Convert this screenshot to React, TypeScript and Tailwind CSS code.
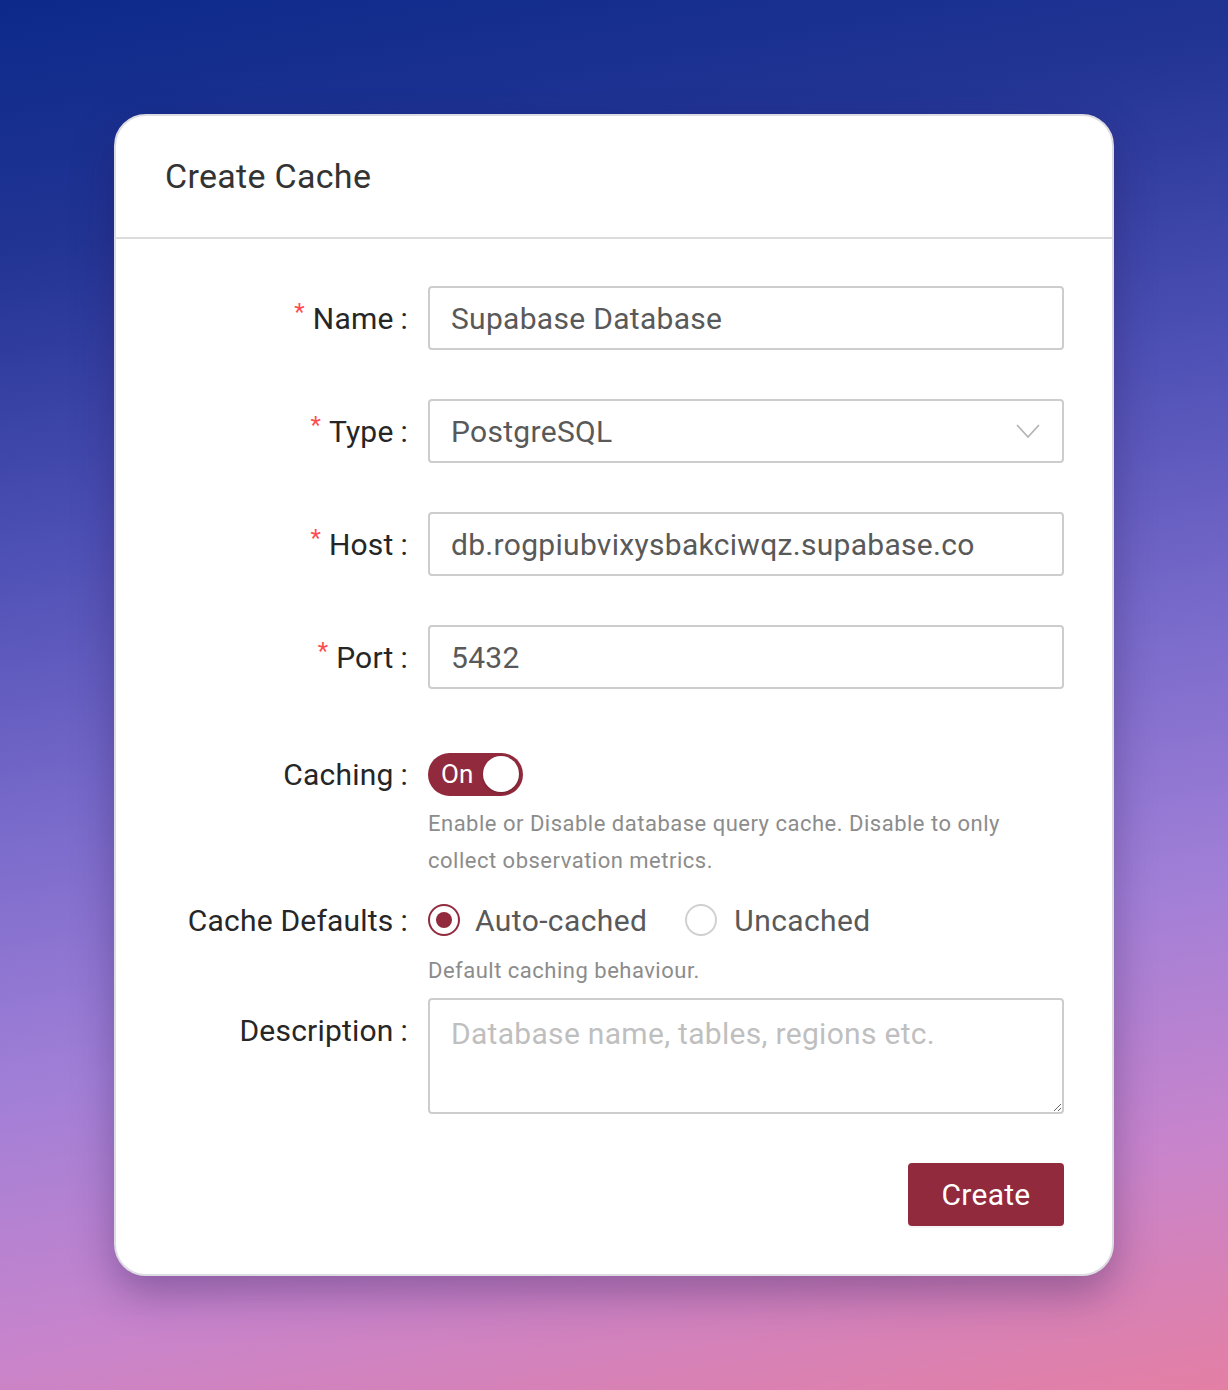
import React, { useState } from 'react';

const font = "font-['Roboto','Liberation_Sans',sans-serif]";

const Label: React.FC<{ text: string; required?: boolean }> = ({ text, required }) => (
    <div className="w-[245px] h-[64px] flex items-center justify-end shrink-0 text-[30px] text-[#262626] tracking-[0.2px]">
        {required && <span className="text-[#ff4d4f] text-[24px] mr-[8px] -mt-[12px]">*</span>}
        <span>{text}</span>
        <span className="ml-[7px] mr-[1px]">:</span>
    </div>
);

const TextInput: React.FC<{ value: string }> = ({ value }) => (
    <div className="h-[64px] w-full border-2 border-[#cdcdcd] rounded-[4px] flex items-center px-[21px] text-[30px] text-[#595959] tracking-[0.3px]">
        {value}
    </div>
);

export default function App() {
    const [caching, setCaching] = useState(true);
    const [mode, setMode] = useState<'auto' | 'none'>('auto');

    return (
        <div className={`${font} w-[1228px] h-[1390px] bg-[linear-gradient(170deg,#0c2a8a_0%,#223494_16%,#4c4fb4_34%,#7a6bcb_52%,#a17fd7_68%,#c784cc_84%,#e47fa4_100%)] pt-[114px] pl-[114px]`}>
            <div className="w-[1000px] h-[1162px] bg-white rounded-[32px] border-2 border-[#dcdce2] shadow-[0_18px_40px_rgba(40,20,80,0.35)] overflow-hidden">
                {/* Header */}
                <div className="h-[123px] border-b-2 border-[#dcdcdc] flex items-center px-[49px]">
                    <h1 className="text-[34px] text-[#333] tracking-[0.3px]">Create Cache</h1>
                </div>

                {/* Body */}
                <div className="px-[48px] pt-[47px]">
                    <div className="flex gap-[19px]">
                        <Label text="Name" required />
                        <div className="flex-1"><TextInput value="Supabase Database" /></div>
                    </div>

                    <div className="flex gap-[19px] mt-[49px]">
                        <Label text="Type" required />
                        <div className="flex-1">
                            <div className="h-[64px] w-full border-2 border-[#cdcdcd] rounded-[4px] flex items-center justify-between pl-[21px] pr-[22px] text-[30px] text-[#595959] tracking-[0.3px]">
                                <span>PostgreSQL</span>
                                <svg width="24" height="16" viewBox="0 0 24 16" fill="none">
                                    <polyline points="1,2 12,14 23,2" stroke="#b5b5b5" strokeWidth="1.8" />
                                </svg>
                            </div>
                        </div>
                    </div>

                    <div className="flex gap-[19px] mt-[49px]">
                        <Label text="Host" required />
                        <div className="flex-1"><TextInput value="db.rogpiubvixysbakciwqz.supabase.co" /></div>
                    </div>

                    <div className="flex gap-[19px] mt-[49px]">
                        <Label text="Port" required />
                        <div className="flex-1"><TextInput value="5432" /></div>
                    </div>

                    {/* Caching */}
                    <div className="flex gap-[19px] mt-[53px]">
                        <div className="h-[62px]"><Label text="Caching" /></div>
                        <div className="flex-1">
                            <div className="h-[64px] flex items-center">
                                <button
                                    onClick={() => setCaching(!caching)}
                                    className={`relative w-[95px] h-[43px] rounded-full flex items-center ${caching ? 'bg-[#922a3d]' : 'bg-[#bfbfbf]'}`}
                                >
                                    <span className="absolute left-[13px] text-white text-[26px] leading-none">{caching ? 'On' : 'Off'}</span>
                                    <span className="absolute right-[4px] w-[36px] h-[36px] rounded-full bg-white shadow-[0_1px_3px_rgba(0,0,0,0.25)]" />
                                </button>
                            </div>
                            <p className="text-[22px] leading-[37px] text-[#8c8c8c] tracking-[0.5px] -mt-[1px] w-[600px]">
                                Enable or Disable database query cache. Disable to only collect observation metrics.
                            </p>
                        </div>
                    </div>

                    {/* Cache defaults */}
                    <div className="flex gap-[19px] mt-[9px]">
                        <Label text="Cache Defaults" />
                        <div className="flex-1">
                            <div className="h-[64px] flex items-center gap-[38px] text-[30px] text-[#595959] tracking-[0.4px]">
                                <label className="flex items-center gap-[15px] cursor-pointer" onClick={() => setMode('auto')}>
                                    <span className={`w-[32px] h-[32px] rounded-full border-2 flex items-center justify-center ${mode === 'auto' ? 'border-[#922a3d]' : 'border-[#d0d0d0]'}`}>
                                        {mode === 'auto' && <span className="w-[16px] h-[16px] rounded-full bg-[#922a3d]" />}
                                    </span>
                                    Auto-cached
                                </label>
                                <label className="flex items-center gap-[17px] cursor-pointer" onClick={() => setMode('none')}>
                                    <span className={`w-[32px] h-[32px] rounded-full border-2 flex items-center justify-center ${mode === 'none' ? 'border-[#922a3d]' : 'border-[#d0d0d0]'}`}>
                                        {mode === 'none' && <span className="w-[16px] h-[16px] rounded-full bg-[#922a3d]" />}
                                    </span>
                                    Uncached
                                </label>
                            </div>
                            <p className="text-[22px] leading-[37px] text-[#8c8c8c] tracking-[0.5px]">Default caching behaviour.</p>
                        </div>
                    </div>

                    {/* Description */}
                    <div className="flex gap-[19px] mt-[9px]">
                        <Label text="Description" />
                        <div className="flex-1">
                            <textarea
                                placeholder="Database name, tables, regions etc."
                                className="block w-full h-[116px] border-2 border-[#cdcdcd] rounded-[4px] px-[21px] pt-[11px] text-[30px] text-[#595959] tracking-[0.3px] placeholder:text-[#bfbfbf] outline-none resize-y"
                            />
                        </div>
                    </div>

                    <div className="flex justify-end mt-[49px]">
                        <button className="w-[156px] h-[63px] rounded-[4px] bg-[#922a3d] text-white text-[30px] tracking-[0.3px] shadow-[0_2px_0_rgba(0,0,0,0.04)]">
                            Create
                        </button>
                    </div>
                </div>
            </div>
        </div>
    );
}
